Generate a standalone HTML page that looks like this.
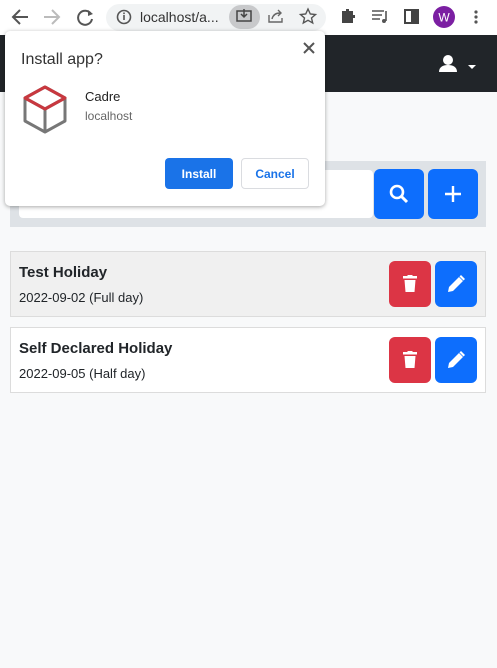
<!DOCTYPE html>
<html><head><style>
body{margin:0;width:497px;height:668px;background:#f8f9fa;font-family:"Liberation Sans",sans-serif;position:relative;overflow:hidden}
.abs{position:absolute}
.btn{position:absolute;border-radius:6px;display:flex;align-items:center;justify-content:center}
</style></head><body>
<div class="abs" style="left:0;top:0;width:497px;height:35px;background:#fff"></div>
<!-- toolbar -->
<svg class="abs" style="left:0;top:0" width="497" height="35">
<path d="M13 17h15M20 10l-7 7 7 7" stroke="#555" stroke-width="2" fill="none"/>
<path d="M44 17h15M52 10l7 7-7 7" stroke="#bbb" stroke-width="2" fill="none"/>
<path d="M91 14a7 7 0 1 0 1 5" stroke="#555" stroke-width="2" fill="none"/><path d="M88 10l5 4-5 2z" fill="#555"/>
<rect x="106" y="4" width="220" height="27" rx="13.5" fill="#f1f3f4"/>
<circle cx="124" cy="17" r="6.5" stroke="#555" stroke-width="1.6" fill="none"/><rect x="123.2" y="15" width="1.6" height="5" fill="#555"/><rect x="123.2" y="12.5" width="1.6" height="1.6" fill="#555"/>
<text x="140" y="22" font-size="14" fill="#333" font-family="Liberation Sans">localhost/a...</text>
<rect x="229" y="5" width="31" height="24" rx="12" fill="#c8c9cb"/>
<rect x="237" y="11" width="14" height="10" fill="none" stroke="#444" stroke-width="1.5"/><path d="M244 9v8M241 14l3 3 3-3" stroke="#444" stroke-width="1.5" fill="none"/>
<path d="M269 15v7h13v-4M272 19c1-4 4-6 8-6M278 10l3 3-3 3" stroke="#666" stroke-width="1.4" fill="none"/>
<path d="M308 9l2.3 5 5.2.5-4 3.5 1.2 5-4.7-2.7-4.7 2.7 1.2-5-4-3.5 5.2-.5z" stroke="#555" stroke-width="1.4" fill="none"/>
<path d="M342 11h4v-2h3v2h4v4h2v3h-2v5h-11z" fill="#444"/>
<path d="M372 11h12M372 15h10M372 19h8M386 11v10" stroke="#555" stroke-width="1.6" fill="none"/><circle cx="384" cy="21" r="2" fill="#555"/>
<rect x="405" y="10" width="13" height="13" stroke="#444" stroke-width="2" fill="none"/><rect x="411" y="10" width="7" height="13" fill="#444"/>
<circle cx="444" cy="17" r="11" fill="#7b1fa2"/><text x="444" y="21.5" font-size="12" fill="#fff" text-anchor="middle" font-family="Liberation Sans">W</text>
<circle cx="476" cy="12" r="1.6" fill="#555"/><circle cx="476" cy="17" r="1.6" fill="#555"/><circle cx="476" cy="22" r="1.6" fill="#555"/>
</svg>
<div class="abs" style="left:0;top:35px;width:497px;height:57px;background:#212529"></div>
<svg class="abs" style="left:437;top:54px;left:437px" width="44" height="22"><circle cx="11" cy="6" r="5" fill="#fff"/><path d="M2 18c0-5 4-7 9-7s9 2 9 7z" fill="#fff"/><path d="M31 11h8l-4 4z" fill="#fff"/></svg>
<!-- search -->
<div class="abs" style="left:10px;top:161px;width:476px;height:66px;background:#dee2e6"></div>
<div class="abs" style="left:19px;top:170px;width:354px;height:48px;background:#fff;border-radius:4px"></div>
<div class="btn" style="left:374px;top:169px;width:50px;height:50px;background:#0d6efd"><svg width="22" height="22"><circle cx="9" cy="9" r="6" stroke="#fff" stroke-width="2.6" fill="none"/><path d="M13 13l6 6" stroke="#fff" stroke-width="3"/></svg></div>
<div class="btn" style="left:428px;top:169px;width:50px;height:50px;background:#0d6efd"><svg width="20" height="20"><path d="M10 2v16M2 10h16" stroke="#fff" stroke-width="2.4"/></svg></div>
<!-- cards -->
<div class="abs" style="left:10px;top:251px;width:474px;height:64px;background:#f0f0f0;border:1px solid #dcdcdc"></div>
<div class="abs" style="left:10px;top:327px;width:474px;height:64px;background:#fff;border:1px solid #dcdcdc"></div>
<div class="abs" style="left:19px;top:264px;font-size:15px;font-weight:bold;color:#212529">Test Holiday</div>
<div class="abs" style="left:19px;top:290px;font-size:13px;color:#212529">2022-09-02 (Full day)</div>
<div class="abs" style="left:19px;top:340px;font-size:15px;font-weight:bold;color:#212529">Self Declared Holiday</div>
<div class="abs" style="left:19px;top:366px;font-size:13px;color:#212529">2022-09-05 (Half day)</div>
<div class="btn" style="left:389px;top:261px;width:42px;height:46px;background:#dc3545"><svg width="14" height="18"><rect x="0" y="1" width="14" height="2.5" fill="#fff"/><rect x="4.5" y="0" width="5" height="2" fill="#fff"/><path d="M1.5 5h11l-1 12h-9z" fill="#fff"/></svg></div>
<div class="btn" style="left:435px;top:261px;width:42px;height:46px;background:#0d6efd"><svg width="20" height="20"><path d="M2 18l1-5 10-10 4 4-10 10z M14.5 1.5l4 4" stroke="#fff" stroke-width="0" fill="#fff"/><path d="M15 1l4 4-1.5 1.5-4-4z" fill="#fff"/></svg></div>
<div class="btn" style="left:389px;top:337px;width:42px;height:46px;background:#dc3545"><svg width="14" height="18"><rect x="0" y="1" width="14" height="2.5" fill="#fff"/><rect x="4.5" y="0" width="5" height="2" fill="#fff"/><path d="M1.5 5h11l-1 12h-9z" fill="#fff"/></svg></div>
<div class="btn" style="left:435px;top:337px;width:42px;height:46px;background:#0d6efd"><svg width="20" height="20"><path d="M2 18l1-5 10-10 4 4-10 10z" fill="#fff"/><path d="M15 1l4 4-1.5 1.5-4-4z" fill="#fff"/></svg></div>
<!-- popup -->
<div class="abs" style="left:5px;top:31px;width:320px;height:175px;background:#fff;border-radius:5px;box-shadow:0 1px 4px rgba(0,0,0,.35)"></div>
<svg class="abs" style="left:302px;top:41px" width="14" height="14"><path d="M2 2l10 10M12 2L2 12" stroke="#555" stroke-width="2"/></svg>
<div class="abs" style="left:21px;top:51px;font-size:16px;color:#333">Install app?</div>
<svg class="abs" style="left:22px;top:85px" width="46" height="50"><path d="M23 2l20 11v23L23 47 3 36V13z M3 13l20 11 20-11 M23 24v23" stroke="#777" stroke-width="3" fill="none" stroke-linejoin="round"/><path d="M3 13L23 2l20 11-20 11z" stroke="#c8383f" stroke-width="3" fill="none" stroke-linejoin="round"/></svg>
<div class="abs" style="left:85px;top:89px;font-size:13px;color:#222">Cadre</div>
<div class="abs" style="left:85px;top:109px;font-size:12px;color:#666">localhost</div>
<div class="btn" style="left:165px;top:158px;width:68px;height:31px;background:#1a73e8;border-radius:4px;color:#fff;font-size:12px;font-weight:bold">Install</div>
<div class="btn" style="left:241px;top:158px;width:66px;height:29px;border:1px solid #dadce0;border-radius:4px;color:#1a73e8;font-size:12px;font-weight:bold">Cancel</div>
</body></html>
